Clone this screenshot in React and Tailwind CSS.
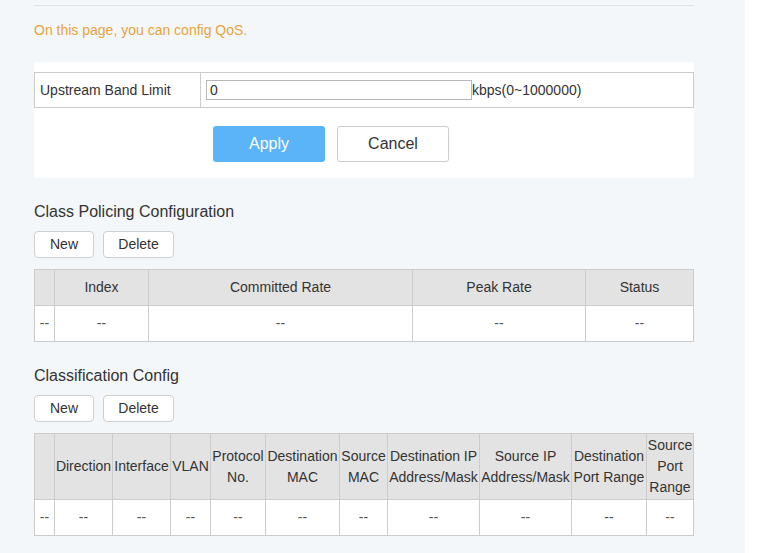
import React from 'react';

const policyCols = [
  { w: 'w-[20px]', label: '' },
  { w: 'w-[94px]', label: 'Index' },
  { w: 'w-[264px]', label: 'Committed Rate' },
  { w: 'w-[173px]', label: 'Peak Rate' },
  { w: 'w-[108px]', label: 'Status' },
];

const classCols = [
  { w: 'w-[20px]', label: '' },
  { w: 'w-[58px]', label: 'Direction' },
  { w: 'w-[58px]', label: 'Interface' },
  { w: 'w-[40px]', label: 'VLAN' },
  { w: 'w-[55px]', label: 'Protocol No.' },
  { w: 'w-[74px]', label: 'Destination MAC' },
  { w: 'w-[48px]', label: 'Source MAC' },
  { w: 'w-[92px]', label: 'Destination IP Address/Mask' },
  { w: 'w-[92px]', label: 'Source IP Address/Mask' },
  { w: 'w-[75px]', label: 'Destination Port Range' },
  { w: 'w-[47px]', label: 'Source Port Range' },
];

const SmallButton = ({ children, className }) => (
  <button
    type="button"
    className={`h-[27px] rounded-[4px] border border-[#cfcfcf] bg-white text-[14px] text-[#333] ${className}`}
  >
    {children}
  </button>
);

const DataTable = ({ cols, headHeight }) => (
  <table className="w-[660px] table-fixed border-collapse text-[14px] leading-[21px]">
    <colgroup>
      {cols.map((c, i) => (
        <col key={i} className={c.w} />
      ))}
    </colgroup>
    <thead>
      <tr className={headHeight}>
        {cols.map((c, i) => (
          <th
            key={i}
            className="border border-[#cccccc] bg-[#e3e3e3] p-0 text-center align-middle font-normal text-[#333]"
          >
            {c.label}
          </th>
        ))}
      </tr>
    </thead>
    <tbody>
      <tr className="h-[36px]">
        {cols.map((c, i) => (
          <td key={i} className="border border-[#cccccc] bg-white p-0 text-center align-middle text-[#555]">
            --
          </td>
        ))}
      </tr>
    </tbody>
  </table>
);

const Section = ({ title, cols, headHeight }) => (
  <div className="flex flex-col">
    <h2 className="text-[16px] leading-[20px] text-[#333]">{title}</h2>
    <div className="mt-[9px] flex gap-[9px]">
      <SmallButton className="w-[60px]">New</SmallButton>
      <SmallButton className="w-[71px]">Delete</SmallButton>
    </div>
    <div className="mt-[11px]">
      <DataTable cols={cols} headHeight={headHeight} />
    </div>
  </div>
);

export default function App() {
  return (
    <div className="flex h-[553px] w-[763px] bg-white font-['Liberation_Sans',Arial,sans-serif]">
      <div className="h-full w-[745px] bg-[#f4f7fa] pl-[34px]">
        <div className="w-[660px]">
          <div className="mt-[5px] h-[1px] bg-[#e1e5e9]" />
          {/* Intro */}
          <p className="mt-[15px] text-[14px] leading-[18px] text-[#e8a33a]">
            On this page, you can config QoS.
          </p>

          {/* Band limit */}
          <div className="mt-[23px] h-[116px] rounded-[3px] bg-white pt-[10px]">
            <div className="flex h-[36px] border border-[#cccccc] text-[14px] text-[#333]">
              <div className="flex w-[166px] items-center border-r border-[#cccccc] pl-[5px]">
                Upstream Band Limit
              </div>
              <div className="flex items-center pl-[5px]">
                <input
                  type="text"
                  defaultValue="0"
                  className="h-[20px] w-[266px] border border-[#b8b8b8] bg-white px-[3px] text-[14px] text-[#333] outline-none"
                />
                <span>kbps(0~1000000)</span>
              </div>
            </div>
            <div className="mt-[18px] flex gap-[12px] pl-[179px]">
              <button
                type="button"
                className="h-[36px] w-[112px] rounded-[3px] bg-[#5ab4f7] text-[16px] text-white"
              >
                Apply
              </button>
              <button
                type="button"
                className="h-[36px] w-[112px] rounded-[3px] border border-[#cccccc] bg-white text-[16px] text-[#333]"
              >
                Cancel
              </button>
            </div>
          </div>

          <div className="mt-[24px]">
            <Section title="Class Policing Configuration" cols={policyCols} headHeight="h-[36px]" />
          </div>
          <div className="mt-[24px]">
            <Section title="Classification Config" cols={classCols} headHeight="h-[66px]" />
          </div>
        </div>
      </div>
    </div>
  );
}
